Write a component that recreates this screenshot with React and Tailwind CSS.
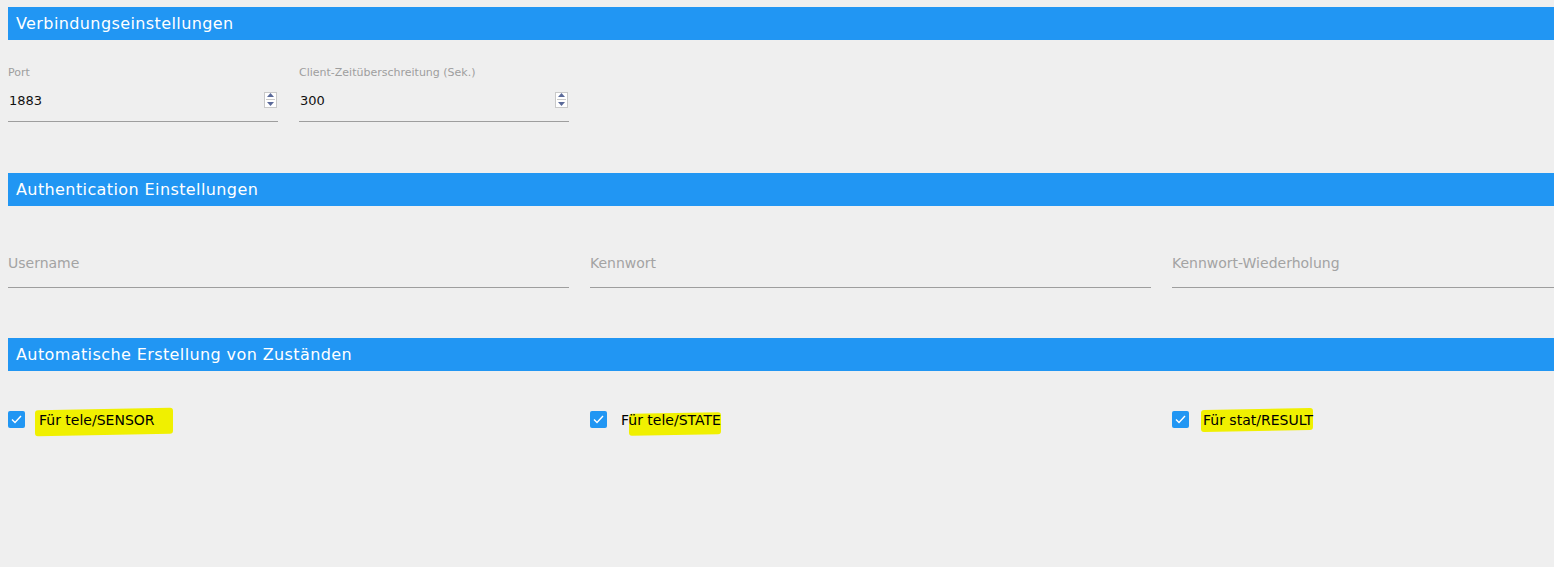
function SectionHeader({ title }) {
  return (
    <div className="h-[33px] bg-[#2196f3] px-2 flex items-center text-white text-[16px] tracking-[0.4px]">
      {title}
    </div>
  );
}

function Spinner() {
  return (
    <div className="w-[13px] h-[16px] bg-white border border-[#c9c9c9] flex flex-col items-center justify-center gap-[2px]">
      <svg width="7" height="4" viewBox="0 0 7 4">
        <path d="M0 4 L3.5 0 L7 4 Z" fill="#5b6a9a" />
      </svg>
      <div className="w-[9px] h-px bg-[#c9c9c9]" />
      <svg width="7" height="4" viewBox="0 0 7 4">
        <path d="M0 0 L3.5 4 L7 0 Z" fill="#5b6a9a" />
      </svg>
    </div>
  );
}

function NumberField({ label, value }) {
  return (
    <div className="flex flex-col">
      <span className="text-[11px] text-[#9e9e9e] h-[14px] leading-[14px]">{label}</span>
      <div className="h-[42px] flex items-center justify-between border-b border-[#9e9e9e]">
        <span className="text-[13px] text-[#111] pl-px">{value}</span>
        <div className="mr-[1px] mb-[2px]">
          <Spinner />
        </div>
      </div>
    </div>
  );
}

function TextField({ label }) {
  return (
    <div className="h-[40px] flex items-start border-b border-[#9e9e9e] pt-[5px]">
      <span className="text-[14px] text-[#a3a3a3]">{label}</span>
    </div>
  );
}

function CheckItem({ label, hl }) {
  return (
    <div className="flex items-center gap-[14px]">
      <div className="w-[17px] h-[17px] rounded-[2px] bg-[#2196f3] flex items-center justify-center">
        <svg width="11" height="9" viewBox="0 0 11 9">
          <path d="M1 4.5 L4 7.5 L10 1" stroke="white" strokeWidth="1.4" fill="none" />
        </svg>
      </div>
      <span className="relative text-[14px] text-black leading-[17px] mt-[3px]">
        <span className={`absolute ${hl} bg-[#f0f000] rounded-[3px] -skew-y-1`} />
        <span className="relative">{label}</span>
      </span>
    </div>
  );
}

export default function App() {
  return (
    <div
      className="w-[1554px] h-[567px] overflow-hidden bg-[#efefef]"
      style={{ fontFamily: '"DejaVu Sans", sans-serif' }}
    >
      <div className="w-[1725px] ml-2 pt-[7px]">
        <SectionHeader title="Verbindungseinstellungen" />
        <div className="grid grid-cols-6 gap-x-[21px] mt-[26px]">
          <NumberField label="Port" value="1883" />
          <NumberField label="Client-Zeitüberschreitung (Sek.)" value="300" />
        </div>

        <div className="mt-[51px]">
          <SectionHeader title="Authentication Einstellungen" />
        </div>
        <div className="grid grid-cols-3 gap-x-[21px] mt-[42px]">
          <TextField label="Username" />
          <TextField label="Kennwort" />
          <TextField label="Kennwort-Wiederholung" />
        </div>

        <div className="mt-[50px]">
          <SectionHeader title="Automatische Erstellung von Zuständen" />
        </div>
        <div className="grid grid-cols-3 gap-x-[21px] mt-[38px]">
          <CheckItem label="Für tele/SENSOR" hl="-left-[4px] -right-[18px] -top-[3px] -bottom-[6px]" />
          <CheckItem label="Für tele/STATE" hl="left-[8px] right-0 top-[1px] -bottom-[6px]" />
          <CheckItem label="Für stat/RESULT" hl="-left-[2px] right-0 -top-[3px] -bottom-[2px]" />
        </div>
      </div>
    </div>
  );
}
